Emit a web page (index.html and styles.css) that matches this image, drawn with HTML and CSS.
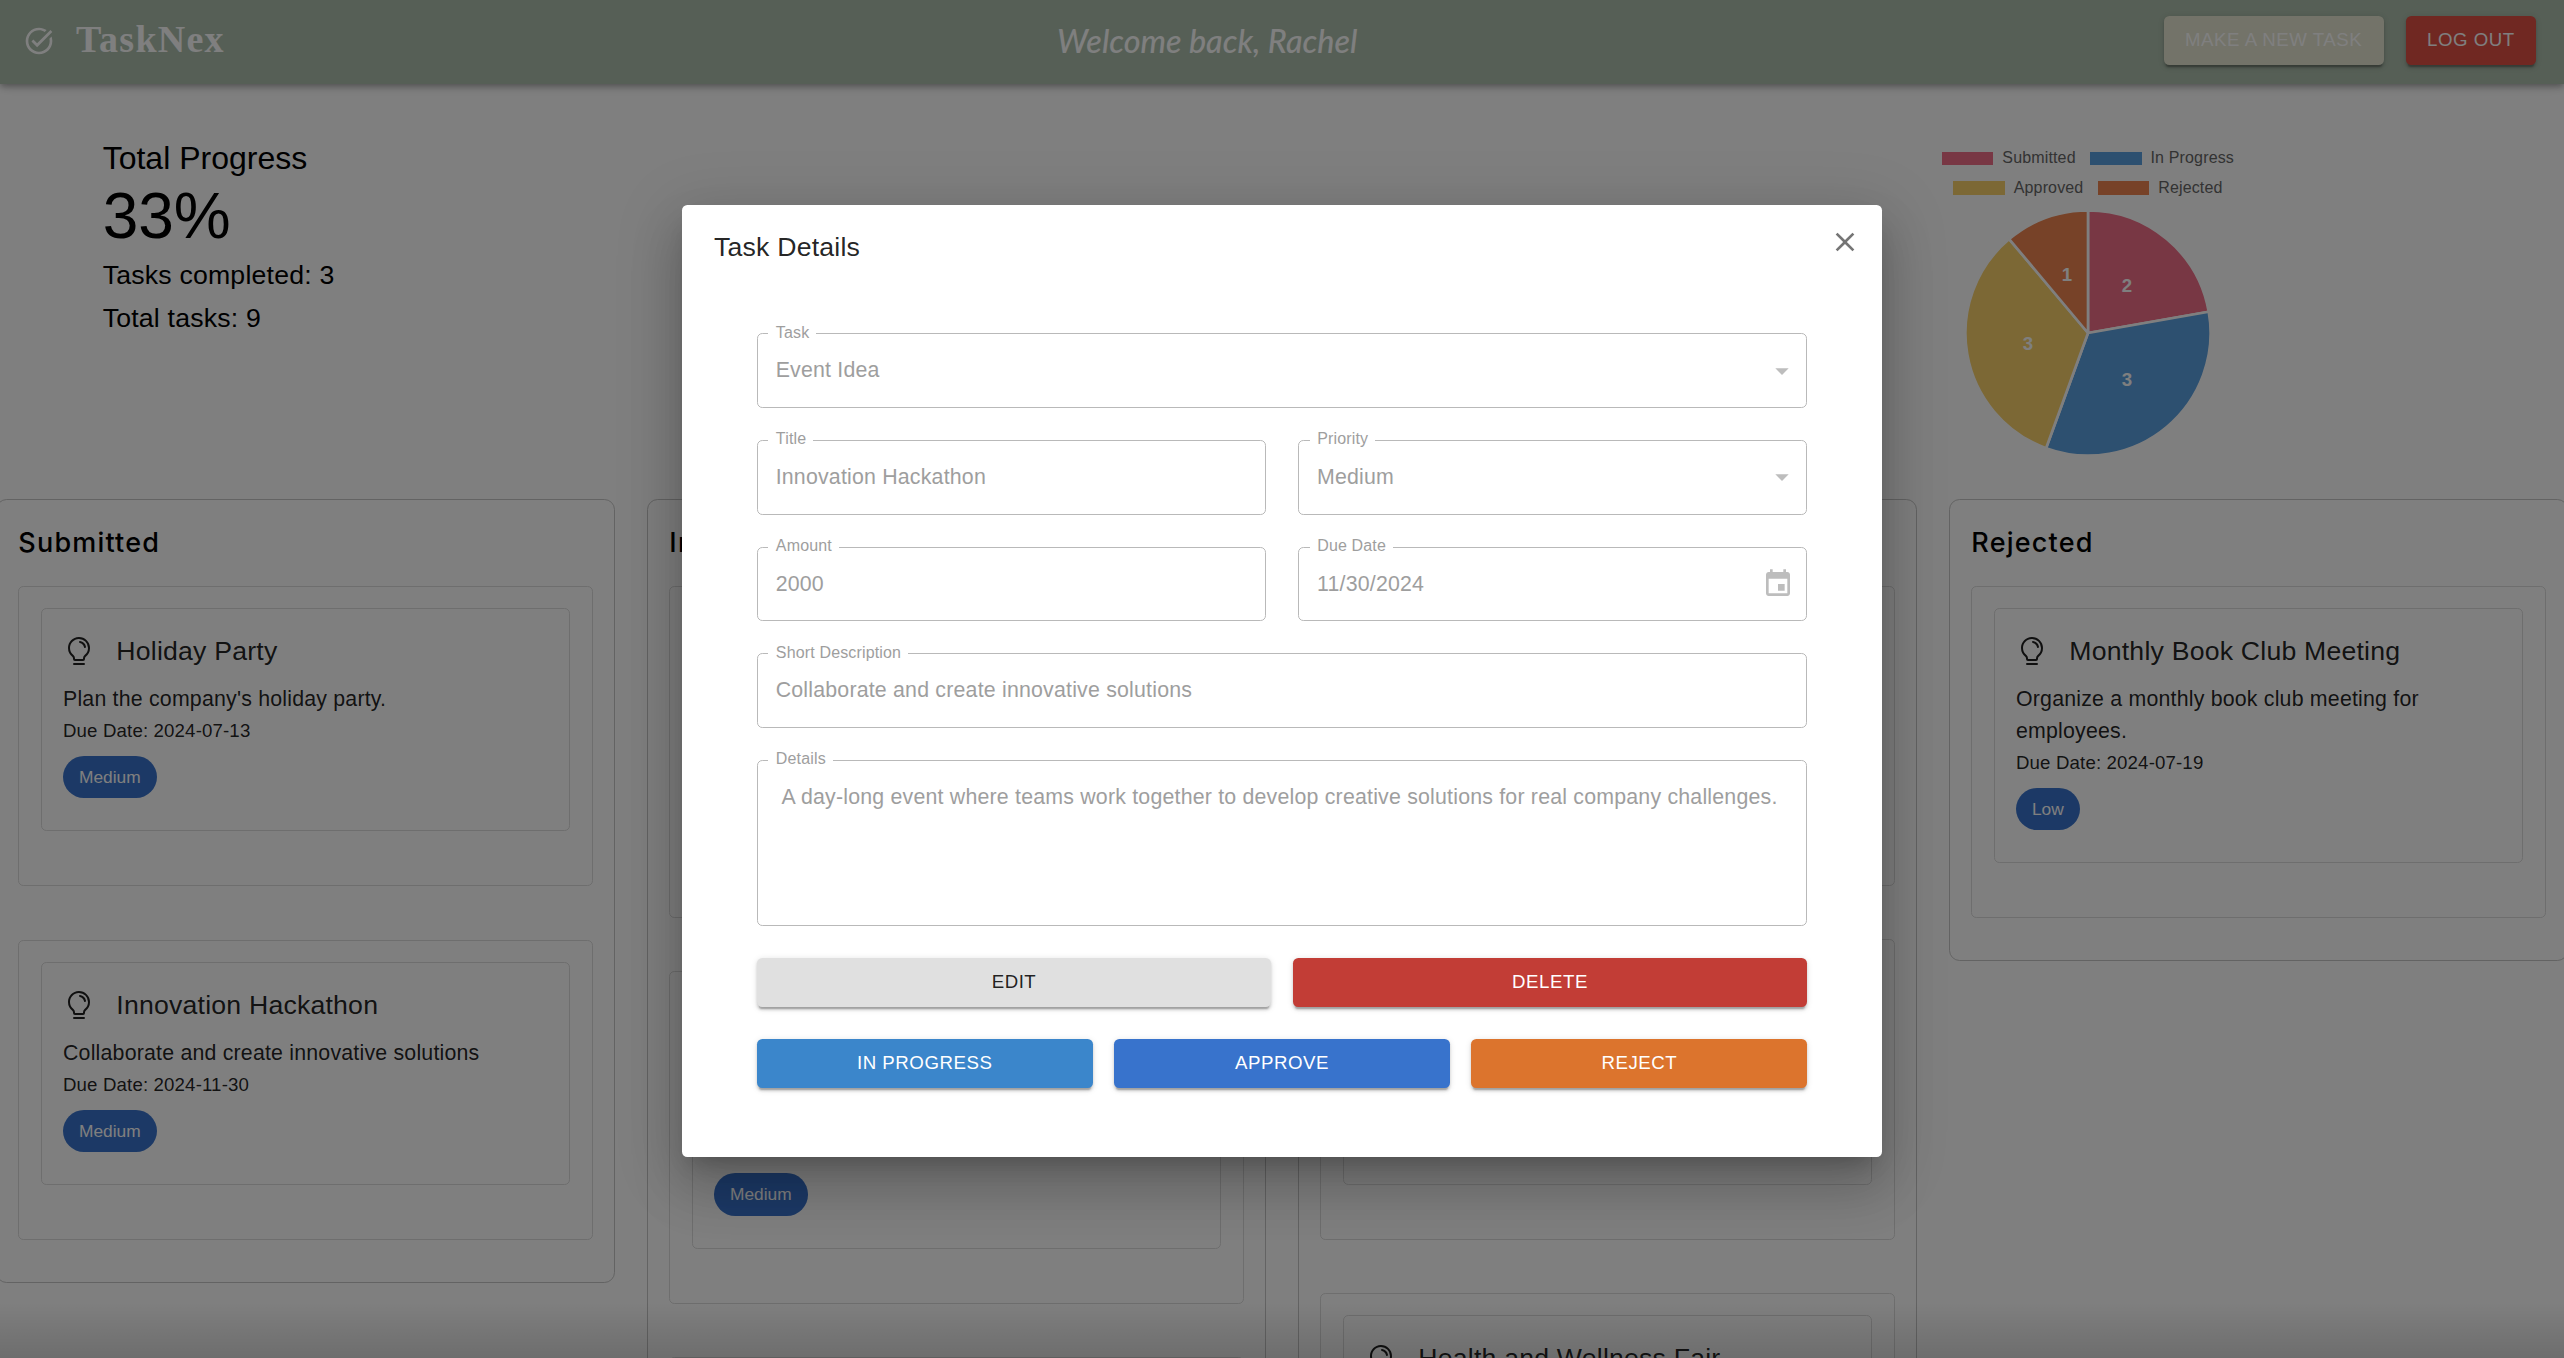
FILE: index.html
```html
<!DOCTYPE html>
<html lang="en">
<head>
<meta charset="utf-8">
<title>TaskNex</title>
<link rel="stylesheet" href="styles.css">
</head>
<body>
<svg class="defs" aria-hidden="true">
  <symbol id="bulb" viewBox="0 0 256 256"><path d="M176,232a8,8,0,0,1-8,8H88a8,8,0,0,1,0-16h80A8,8,0,0,1,176,232Zm40-128a87.55,87.55,0,0,1-33.64,69.21A16.24,16.24,0,0,0,176,186v6a16,16,0,0,1-16,16H96a16,16,0,0,1-16-16v-6a16,16,0,0,0-6.23-12.66A87.59,87.59,0,0,1,40,104.49C39.74,56.83,78.26,17.14,125.88,16A88,88,0,0,1,216,104Zm-16,0a72,72,0,0,0-73.74-72c-39,.92-70.47,33.39-70.26,72.39a71.65,71.65,0,0,0,27.64,56.3A32,32,0,0,1,96,186v6h64v-6a32.15,32.15,0,0,1,12.47-25.35A71.65,71.65,0,0,0,200,104Zm-16.11-9.34a57.6,57.6,0,0,0-46.56-46.55,8,8,0,0,0-2.66,15.78c16.57,2.79,30.63,16.85,33.44,33.45A8,8,0,0,0,176,104a9,9,0,0,0,1.35-.11A8,8,0,0,0,183.89,94.66Z"/></symbol>
</svg>
<div class="page">
  <header class="appbar">
    <div class="brand">
      <svg class="icon" viewBox="0 0 24 24"><path d="M22 5.18 10.59 16.6l-4.24-4.24 1.41-1.41 2.83 2.83 10-10L22 5.18zm-2.21 5.04c.13.57.21 1.17.21 1.78 0 4.42-3.58 8-8 8s-8-3.58-8-8 3.58-8 8-8c1.58 0 3.04.46 4.28 1.25l1.44-1.44C16.1 2.67 14.13 2 12 2 6.48 2 2 6.48 2 12s4.48 10 10 10 10-4.48 10-10c0-1.19-.22-2.33-.6-3.39l-1.61 1.61z"/></svg>
      <span class="brand-name">TaskNex</span>
    </div>
    <div class="welcome">Welcome back, Rachel</div>
    <div class="appbar-actions">
      <button class="btn btn-new">Make a new task</button>
      <button class="btn btn-logout">Log out</button>
    </div>
  </header>

  <section class="overview">
    <div class="progress">
      <div class="progress-title">Total Progress</div>
      <div class="progress-value">33%</div>
      <div class="progress-line">Tasks completed: 3</div>
      <div class="progress-line">Total tasks: 9</div>
    </div>
    <div class="chart">
      <div class="legend">
        <div class="legend-row">
          <span class="key"><i class="swatch pink"></i>Submitted</span>
          <span class="key"><i class="swatch blue"></i>In Progress</span>
        </div>
        <div class="legend-row">
          <span class="key"><i class="swatch yellow"></i>Approved</span>
          <span class="key"><i class="swatch orange"></i>Rejected</span>
        </div>
      </div>
      <svg class="pie" viewBox="-125 -125 250 250">
        <g stroke="#fff" stroke-width="2.67" stroke-linejoin="bevel">
          <path class="f-pink" d="M0 0V-122.6A122.6 122.6 0 0 1 120.74 -21.29Z"/>
          <path class="f-blue" d="M0 0L120.74 -21.29A122.6 122.6 0 0 1 -41.93 115.21Z"/>
          <path class="f-yellow" d="M0 0L-41.93 115.21A122.6 122.6 0 0 1 -78.81 -93.92Z"/>
          <path class="f-orange" d="M0 0L-78.81 -93.92A122.6 122.6 0 0 1 0 -122.6Z"/>
        </g>
        <g class="pie-labels">
          <text x="39" y="-41">2</text>
          <text x="39" y="53">3</text>
          <text x="-60" y="17">3</text>
          <text x="-21" y="-52">1</text>
        </g>
      </svg>
    </div>
  </section>

  <main class="board">
    <section class="column">
      <h2>Submitted</h2>
      <article class="slot"><div class="card">
        <div class="card-head"><svg class="icon"><use href="#bulb"/></svg><h3>Holiday Party</h3></div>
        <p>Plan the company's holiday party.</p><div class="due">Due Date: 2024-07-13</div><span class="chip">Medium</span>
      </div></article>
      <article class="slot"><div class="card">
        <div class="card-head"><svg class="icon"><use href="#bulb"/></svg><h3>Innovation Hackathon</h3></div>
        <p>Collaborate and create innovative solutions</p><div class="due">Due Date: 2024-11-30</div><span class="chip">Medium</span>
      </div></article>
    </section>
    <section class="column">
      <h2>In Progress</h2>
      <article class="slot"><div class="card two-line"></div></article>
      <article class="slot"><div class="card two-line last-chip"><span class="chip">Medium</span></div></article>
      <article class="slot"><div class="card"></div></article>
    </section>
    <section class="column">
      <h2>Approved</h2>
      <article class="slot"><div class="card"></div></article>
      <article class="slot"><div class="card"></div></article>
      <article class="slot"><div class="card">
        <div class="card-head"><svg class="icon"><use href="#bulb"/></svg><h3>Health and Wellness Fair</h3></div>
      </div></article>
    </section>
    <section class="column">
      <h2>Rejected</h2>
      <article class="slot"><div class="card">
        <div class="card-head"><svg class="icon"><use href="#bulb"/></svg><h3>Monthly Book Club Meeting</h3></div>
        <p>Organize a monthly book club meeting for employees.</p><div class="due">Due Date: 2024-07-19</div><span class="chip">Low</span>
      </div></article>
    </section>
  </main>
  <div class="bottom-fade"></div>
</div>

<div class="backdrop">
  <div class="dialog" role="dialog">
    <div class="dialog-title">Task Details</div>
    <svg class="icon close" viewBox="0 0 24 24"><path d="M19 6.41 17.59 5 12 10.59 6.41 5 5 6.41 10.59 12 5 17.59 6.41 19 12 13.41 17.59 19 19 17.59 13.41 12z"/></svg>
    <div class="form">
      <div class="field"><label>Task</label><span>Event Idea</span><svg class="icon" viewBox="0 0 24 24"><path d="m7 10 5 5 5-5z"/></svg></div>
      <div class="row">
        <div class="field"><label>Title</label><span>Innovation Hackathon</span></div>
        <div class="field"><label>Priority</label><span>Medium</span><svg class="icon" viewBox="0 0 24 24"><path d="m7 10 5 5 5-5z"/></svg></div>
      </div>
      <div class="row">
        <div class="field"><label>Amount</label><span>2000</span></div>
        <div class="field date"><label>Due Date</label><span>11/30/2024</span><svg class="icon" viewBox="0 0 24 24"><path d="M17 12h-5v5h5v-5zM16 1v2H8V1H6v2H5c-1.11 0-1.99.9-1.99 2L3 19c0 1.1.89 2 2 2h14c1.1 0 2-.9 2-2V5c0-1.1-.9-2-2-2h-1V1h-2zm3 18H5V8h14v11z"/></svg></div>
      </div>
      <div class="field"><label>Short Description</label><span>Collaborate and create innovative solutions</span></div>
      <div class="field details"><label>Details</label><span> A day-long event where teams work together to develop creative solutions for real company challenges.</span></div>
      <div class="row actions">
        <button class="btn btn-edit">Edit</button>
        <button class="btn btn-delete">Delete</button>
      </div>
      <div class="row actions">
        <button class="btn btn-progress">In progress</button>
        <button class="btn btn-approve">Approve</button>
        <button class="btn btn-reject">Reject</button>
      </div>
    </div>
  </div>
</div>
</body>
</html>
```
FILE: styles.css
```css
* { box-sizing: border-box; }
html, body { margin: 0; height: 1358px; overflow: hidden; background: #fff; }
body { font-family: "Liberation Sans", Helvetica, Arial, sans-serif; font-size: 21.33px; letter-spacing: 0.00938em; position: relative; }
h2, h3, p { margin: 0; }
.defs { position: absolute; width: 0; height: 0; }
.icon { width: 32px; height: 32px; flex: none; fill: currentColor; display: block; }
.page { height: 1358px; overflow: hidden; position: relative; }

/* app bar */
.appbar {
  height: 84px; padding: 16px 28px 0 23px; background: #acbeac; color: #fff;
  display: flex; justify-content: space-between; align-items: flex-start; position: relative;
  box-shadow: 0 2.7px 5.3px -1.3px rgba(0,0,0,.2), 0 5.3px 6.7px rgba(0,0,0,.14), 0 1.3px 13.3px rgba(0,0,0,.12);
}
.brand { display: flex; align-items: center; gap: 21px; width: 227px; height: 49px; }
.brand-name { font: bold 38px/44px "Liberation Serif", serif; letter-spacing: 1.25px; padding-bottom: 4px; }
.welcome { font: italic 500 33px/48px Lato, sans-serif; letter-spacing: 0; white-space: nowrap; transform: scaleX(.98); }
.appbar-actions { display: flex; justify-content: flex-end; gap: 22px; }
.btn {
  border: 0; border-radius: 5.33px; height: 48.67px; padding: 0 21.33px .5px; color: #fff;
  font: 18.67px/32.67px "Liberation Sans", Helvetica, Arial, sans-serif; letter-spacing: .02857em; text-transform: uppercase; white-space: nowrap;
  box-shadow: 0 4px 1.3px -2.7px rgba(0,0,0,.2), 0 2.7px 2.7px rgba(0,0,0,.14), 0 1.3px 6.7px rgba(0,0,0,.12);
}
.btn-new { background: #e6e6d2; }
.btn-logout { background: #e05044; }

/* progress summary and chart */
.overview { height: 415px; display: flex; justify-content: space-between; padding: 52.8px 331px 0 102.67px; color: #000; }
.progress { letter-spacing: 0; }
.progress-title { font-size: 32px; line-height: 42.67px; }
.progress-value { font-size: 64px; line-height: 74.67px; }
.progress-line { font-size: 26.67px; line-height: 42.67px; letter-spacing: .0075em; }
.chart { width: 290px; padding-top: 7px; display: flex; flex-direction: column; align-items: center; }
.legend { font-size: 16px; letter-spacing: .15px; color: #666; margin-bottom: 5px; white-space: nowrap; }
.legend-row { display: flex; justify-content: center; gap: 14.5px; height: 29.4px; align-items: center; }
.key { display: flex; align-items: center; gap: 9px; line-height: 18px; }
.swatch { width: 51.3px; height: 13.3px; flex: none; }
.pink { background: #f06e88; } .blue { background: #5aa0e0; }
.yellow { background: #f8d06a; } .orange { background: #ee8450; }
.f-pink { fill: #f06e88; } .f-blue { fill: #5aa0e0; }
.f-yellow { fill: #f8d06a; } .f-orange { fill: #ee8450; }
.pie { width: 250px; height: 250px; flex: none; }
.pie-labels { fill: #fff; font-weight: bold; font-size: 18.67px; text-anchor: middle; letter-spacing: 0; }

/* board */
.board { display: grid; grid-template-columns: repeat(4, 618.5px); gap: 32.5px; margin-left: -4px; align-items: start; }
.column { border: 1px solid #c6c6c6; border-radius: 10.67px; padding: 23.33px 21px 42px 21.33px; display: grid; gap: 53.33px; }
.column h2 { font: 500 27px/40px Inter, sans-serif; letter-spacing: 1.2px; color: #000; margin-bottom: -31px; }
.slot { border: 1px solid #dcdcdc; border-radius: 5.33px; padding: 21px 21.33px 54px; }
.card { border: 1px solid #dcdcdc; border-radius: 5.33px; padding: 21.33px 21.33px 32px; min-height: 223.3px; color: rgba(0,0,0,.87); }
.card.two-line { min-height: 255.3px; }
.card.last-chip { display: flex; flex-direction: column; justify-content: flex-end; align-items: flex-start; }
.card-head { display: flex; align-items: center; gap: 21.33px; height: 42.67px; margin-bottom: 10px; }
.card h3 { font-weight: 400; font-size: 26.67px; line-height: 42.67px; letter-spacing: .0075em; }
.card p { line-height: 32px; }
.due { font-size: 18.67px; line-height: 31px; letter-spacing: .0075em; }
.chip { display: block; width: max-content; height: 42.67px; line-height: 42.67px; padding: 0 16px; margin-top: 10px; border-radius: 21.33px; background: #3873cc; color: #fff; font-size: 17.33px; letter-spacing: 0; }
.bottom-fade { position: absolute; left: 0; right: 0; bottom: 0; height: 56px; background: linear-gradient(rgba(0,0,0,0), rgba(0,0,0,.14)); }

/* dialog */
.backdrop { position: absolute; inset: 0; background: rgba(0,0,0,.5); display: flex; justify-content: center; align-items: flex-start; padding-top: 205px; }
.dialog {
  position: relative; width: 1200px; height: 952px; background: #fff; border-radius: 5.33px; color: rgba(0,0,0,.87);
  box-shadow: 0 14.7px 20px -9.3px rgba(0,0,0,.2), 0 32px 50.7px 4px rgba(0,0,0,.14), 0 12px 61.3px 10.7px rgba(0,0,0,.12);
}
.dialog-title { padding: 21px 32px 0; font-size: 26.67px; line-height: 42.67px; letter-spacing: .0075em; }
.close { position: absolute; right: 21px; top: 21px; color: #757575; }
.form { padding: 64.67px 74.67px 0; display: flex; flex-direction: column; gap: 32px; }
.row { display: grid; grid-auto-flow: column; grid-auto-columns: minmax(0, 1fr); gap: 32px; }
.actions { gap: 21.33px; }
.field { position: relative; height: 74.67px; border: 1px solid #b9b9b9; border-radius: 5.33px; padding: 0 8.67px 0 18px; display: flex; align-items: center; justify-content: space-between; color: #9e9e9e; }
.field label { position: absolute; left: 10.5px; top: -9.5px; padding: 0 7px 0 7.7px; background: #fff; font-size: 16px; line-height: 16px; letter-spacing: .00938em; }
.field span { white-space: pre; line-height: 30.67px; }
.field .icon { color: #bdbdbd; }
.field.date { padding-right: 12px; }
.field.details { height: 166.3px; align-items: flex-start; padding: 21px 0 0 19px; }
.btn-edit { background: #e0e0e0; color: rgba(0,0,0,.87); }
.btn-delete { background: #c23d36; }
.btn-progress { background: #3b86cb; }
.btn-approve { background: #3873cc; }
.btn-reject { background: #dc742d; }
```
